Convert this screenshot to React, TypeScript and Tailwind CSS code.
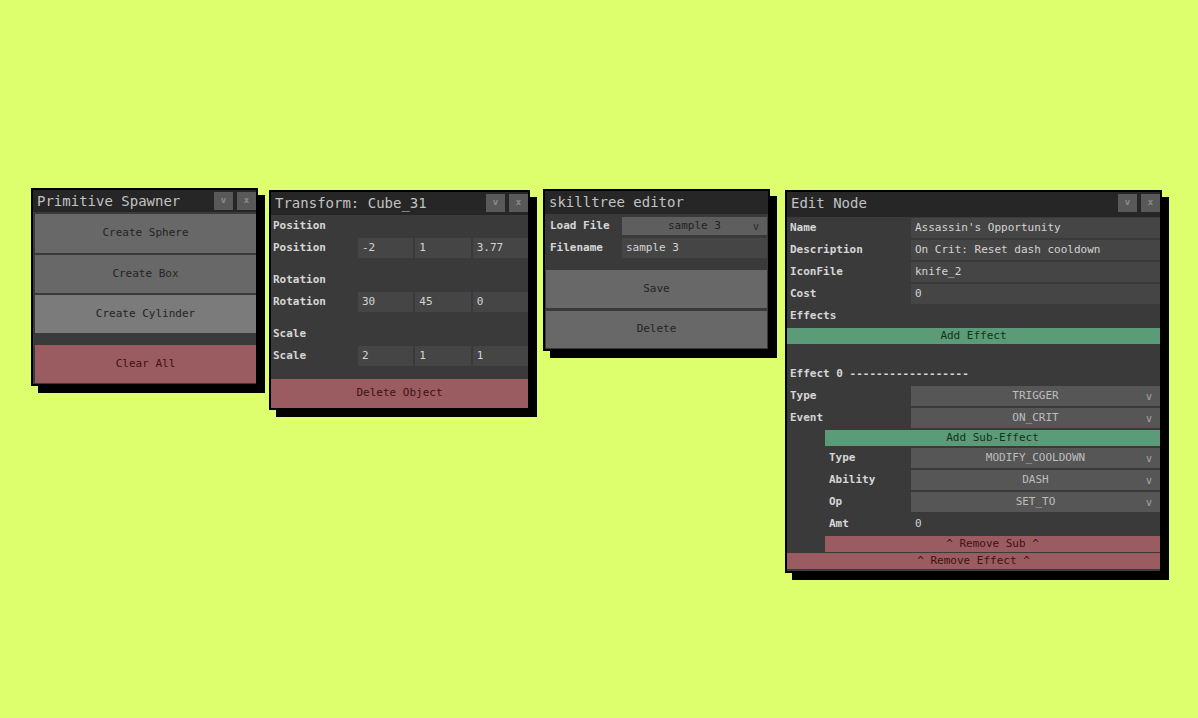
import React from 'react';

const mono = { fontFamily: "'DejaVu Sans Mono', 'Liberation Mono', monospace" };

interface PanelProps {
  title: string;
  className?: string;
  titleH: string;
  controls?: boolean;
  children: React.ReactNode;
}

// Dark editor window with a hard black drop shadow
const Panel: React.FC<PanelProps> = ({ title, className, titleH, controls, children }) => (
  <div className={`border-2 border-black bg-[#3a3a3a] shadow-[7px_7px_0_#000] ${className ?? ''}`}>
    <div className={`flex items-start justify-between bg-[#262626] ${titleH}`}>
      <span className="pl-[4px] text-[14px] leading-[22px] text-[#c2c2c2]">{title}</span>
      {controls && (
        <div className="flex gap-[4px] pt-[2px]">
          <span className="flex h-[18px] w-[19px] items-center justify-center bg-[#595959] text-[9px] font-bold text-[#8c8c8c]">v</span>
          <span className="flex h-[18px] w-[19px] items-center justify-center bg-[#595959] text-[9px] font-bold text-[#8c8c8c]">x</span>
        </div>
      )}
    </div>
    {children}
  </div>
);

const GrayBtn: React.FC<{ h: string; light?: boolean; children: React.ReactNode }> = ({ h, light, children }) => (
  <div className={`flex items-center justify-center text-[11px] text-[#242424] ${h} ${light ? 'bg-[#7b7b7b]' : 'bg-[#686868]'}`}>
    {children}
  </div>
);

const RedBtn: React.FC<{ h: string; className?: string; children: React.ReactNode }> = ({ h, className, children }) => (
  <div className={`flex items-center justify-center bg-[#9a5c61] text-[11px] text-[#421014] ${h} ${className ?? ''}`}>
    {children}
  </div>
);

const GreenBtn: React.FC<{ className?: string; children: React.ReactNode }> = ({ className, children }) => (
  <div className={`flex h-[16px] items-center justify-center bg-[#5c9b77] text-[11px] text-[#0f331c] ${className ?? ''}`}>
    {children}
  </div>
);

const Field: React.FC<{ children: React.ReactNode }> = ({ children }) => (
  <div className="flex h-[20px] items-center bg-[#454545] pl-[4px] text-[11px] text-[#d4d4d4]">{children}</div>
);

const Select: React.FC<{ value: string }> = ({ value }) => (
  <div className="relative flex h-[20px] items-center justify-center bg-[#565656] text-[11px] text-[#bdbdbd]">
    {value}
    <span className="absolute right-[8px] top-[3px] text-[10px] text-[#a8a8a8]">v</span>
  </div>
);

const Label: React.FC<{ children: React.ReactNode; className?: string }> = ({ children, className }) => (
  <span className={`text-[11px] font-bold text-[#d6d6d6] ${className ?? ''}`}>{children}</span>
);

function PrimitiveSpawner() {
  return (
    <Panel title="Primitive Spawner" className="w-[227px]" titleH="h-[22px]" controls>
      <div className="flex flex-col gap-[2px] pb-[1px] pl-[2px] pt-[2px]">
        <GrayBtn h="h-[39px]">Create Sphere</GrayBtn>
        <GrayBtn h="h-[38px]">Create Box</GrayBtn>
        <GrayBtn h="h-[38px]" light>Create Cylinder</GrayBtn>
        <RedBtn h="h-[38px]" className="mt-[10px]">Clear All</RedBtn>
      </div>
    </Panel>
  );
}

const vectors = [
  { name: 'Position', values: ['-2', '1', '3.77'] },
  { name: 'Rotation', values: ['30', '45', '0'] },
  { name: 'Scale', values: ['2', '1', '1'] },
];

function TransformPanel() {
  return (
    <Panel title="Transform: Cube_31" className="mt-[2px] ml-[11px] w-[261px]" titleH="h-[23px]" controls>
      <div className="flex flex-col pt-[2px]">
        {vectors.map((v) => (
          <div key={v.name} className="mb-[13px] flex flex-col gap-[3px]">
            <div className="flex h-[18px] items-center pl-[2px]">
              <Label>{v.name}</Label>
            </div>
            <div className="grid grid-cols-[85px_1fr_1fr_1fr] gap-x-[2px]">
              <div className="flex h-[20px] items-center pl-[2px]">
                <Label>{v.name}</Label>
              </div>
              {v.values.map((n, i) => (
                <Field key={i}>{n}</Field>
              ))}
            </div>
          </div>
        ))}
        <RedBtn h="h-[29px]">Delete Object</RedBtn>
      </div>
    </Panel>
  );
}

function SkilltreeEditor() {
  return (
    <Panel title="skilltree editor" className="mt-[1px] ml-[13px] w-[227px]" titleH="h-[23px]">
      <div className="flex flex-col px-[1px] pb-[1px] pt-[3px]">
        <div className="grid grid-cols-[76px_1fr] gap-y-[3px]">
          <div className="flex h-[18px] items-center pl-[4px]">
            <Label>Load File</Label>
          </div>
          <div className="relative flex h-[18px] items-center justify-center bg-[#5e5e5e] text-[11px] text-[#222222]">
            sample 3
            <span className="absolute right-[8px] top-[2px] text-[10px] text-[#2a2a2a]">v</span>
          </div>
          <div className="flex h-[20px] items-center pl-[4px]">
            <Label>Filename</Label>
          </div>
          <Field>sample 3</Field>
        </div>
        <div className="mt-[12px] flex flex-col gap-[3px]">
          <GrayBtn h="h-[38px]">Save</GrayBtn>
          <GrayBtn h="h-[37px]">Delete</GrayBtn>
        </div>
      </div>
    </Panel>
  );
}

function Row({ label, sub, children }: { label: string; sub?: boolean; children: React.ReactNode }) {
  return (
    <div className={`grid ${sub ? 'ml-[38px] grid-cols-[86px_1fr]' : 'grid-cols-[124px_1fr]'}`}>
      <div className={`flex h-[20px] items-center ${sub ? 'pl-[4px]' : 'pl-[3px]'}`}>
        <Label>{label}</Label>
      </div>
      {children}
    </div>
  );
}

function EditNode() {
  return (
    <Panel title="Edit Node" className="mt-[2px] ml-[15px] w-[377px]" titleH="h-[25px]" controls>
      <div className="flex flex-col gap-[2px] pb-[2px] pt-[1px]">
        <Row label="Name"><Field>Assassin's Opportunity</Field></Row>
        <Row label="Description"><Field>On Crit: Reset dash cooldown</Field></Row>
        <Row label="IconFile"><Field>knife_2</Field></Row>
        <Row label="Cost"><Field>0</Field></Row>
        <div className="flex h-[20px] items-center pl-[3px]">
          <Label>Effects</Label>
        </div>
        <GreenBtn>Add Effect</GreenBtn>
        <div className="mt-[18px] flex h-[20px] items-center pl-[3px]">
          <Label>Effect 0 ------------------</Label>
        </div>
        <Row label="Type"><Select value="TRIGGER" /></Row>
        <Row label="Event"><Select value="ON_CRIT" /></Row>
        <GreenBtn className="ml-[38px]">Add Sub-Effect</GreenBtn>
        <Row label="Type" sub><Select value="MODIFY_COOLDOWN" /></Row>
        <Row label="Ability" sub><Select value="DASH" /></Row>
        <Row label="Op" sub><Select value="SET_TO" /></Row>
        <Row label="Amt" sub>
          <div className="flex h-[20px] items-center pl-[4px] text-[11px] text-[#d4d4d4]">0</div>
        </Row>
        <RedBtn h="h-[16px]" className="ml-[38px]">^ Remove Sub ^</RedBtn>
        <RedBtn h="h-[16px]" className="-mt-[1px]">^ Remove Effect ^</RedBtn>
      </div>
    </Panel>
  );
}

export default function App() {
  return (
    <div className="flex min-h-[718px] items-start bg-[#ddff6d] pl-[31px] pt-[188px]" style={mono}>
      <PrimitiveSpawner />
      <TransformPanel />
      <SkilltreeEditor />
      <EditNode />
    </div>
  );
}
